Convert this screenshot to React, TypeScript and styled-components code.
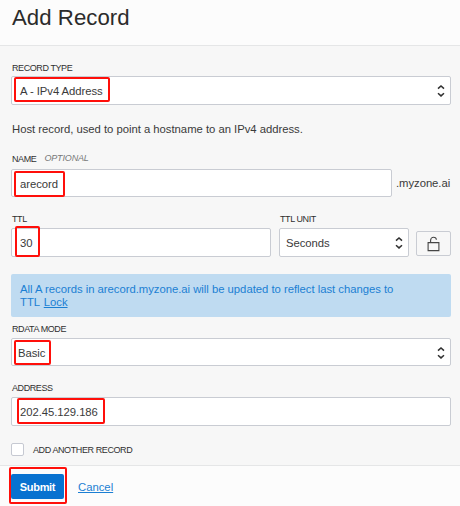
import React from "react";
import styled, { createGlobalStyle } from "styled-components";

const GlobalStyle = createGlobalStyle`
  *, *::before, *::after { box-sizing: border-box; }
  body {
    margin: 0;
    background: #f7f7f7;
    font-family: "Liberation Sans", Arial, sans-serif;
    font-size: 11.3px;
    color: #3a3a3a;
  }
`;

const Panel = styled.main`
  display: flex;
  flex-direction: column;
  width: 460px;
  height: 506px;
  overflow: hidden;
  background: #f7f7f7;
`;

const Header = styled.header`
  flex: none;
  height: 46px;
  padding: 4px 12px 0;
  background: #fcfcfc;
  border-bottom: 1px solid #e5e6e7;
`;

const Title = styled.h1`
  margin: 0;
  font-size: 22.2px;
  font-weight: 400;
  line-height: 28px;
  letter-spacing: 0.05px;
  color: #2b2b2b;
  white-space: nowrap;
`;

const Form = styled.form`
  flex: none;
  height: 419px;
  padding: 16px 9px 0 11px;
  display: flex;
  flex-direction: column;
`;

const Field = styled.div<{ $width?: string; $gap?: number }>`
  display: flex;
  flex-direction: column;
  flex: none;
  width: ${(p) => p.$width ?? "100%"};
  margin-bottom: ${(p) => p.$gap ?? 0}px;
`;

const Label = styled.span<{ $height?: number }>`
  display: block;
  height: ${(p) => p.$height ?? 14}px;
  padding-left: 1px;
  font-size: 9px;
  line-height: 12px;
  letter-spacing: -0.42px;
  color: #303030;
  white-space: nowrap;
`;

const Optional = styled.em`
  position: relative;
  top: -1px;
  margin-left: 6px;
  font-size: 9px;
  letter-spacing: -0.15px;
  color: #777;
`;

const Control = styled.div<{ $width?: number; $height?: number; $inset?: number }>`
  position: relative;
  display: flex;
  align-items: center;
  justify-content: space-between;
  width: ${(p) => (p.$width ? `${p.$width}px` : "100%")};
  height: ${(p) => p.$height ?? 29}px;
  padding: 1px 5px 0 ${(p) => p.$inset ?? 8}px;
  border: 1px solid #c9ccd3;
  border-radius: 2px;
  background: #fff;
`;

const Value = styled.span`
  line-height: 14px;
  letter-spacing: -0.05px;
  white-space: nowrap;
`;

const Highlight = styled.span<{ $x: number; $y: number; $w: number; $h: number }>`
  position: absolute;
  left: ${(p) => p.$x}px;
  top: ${(p) => p.$y}px;
  width: ${(p) => p.$w}px;
  height: ${(p) => p.$h}px;
  border: 2px solid #ff0f0a;
  border-radius: 2px;
  pointer-events: none;
`;

const Hint = styled.p`
  margin: 0 0 17px 1px;
  line-height: 14px;
  letter-spacing: -0.02px;
  white-space: nowrap;
`;

const Row = styled.div<{ $gap: number; $align?: string }>`
  display: flex;
  align-items: ${(p) => p.$align ?? "center"};
  gap: ${(p) => p.$gap}px;
`;

const LockButton = styled.button`
  display: flex;
  align-items: center;
  justify-content: center;
  width: 35px;
  height: 25px;
  margin: 0 0 1px -1px;
  padding: 0;
  border: 1px solid #c9ccd3;
  border-radius: 2px;
  background: #f7f7f7;
`;

const Notice = styled.div`
  flex: none;
  height: 43px;
  margin: 17px 0 6px;
  padding: 9px 9px 8px;
  border-radius: 2px;
  background: #bfdbf1;
  color: #1b7fd3;
  line-height: 13px;
  letter-spacing: -0.02px;
  white-space: nowrap;
`;

const Link = styled.a`
  color: #1b7fd3;
  text-decoration: underline;
`;

const NoticeLink = styled(Link)`
  margin-left: 1px;
`;

const Checkbox = styled.span`
  width: 13px;
  height: 13px;
  border: 1px solid #c6c9d2;
  border-radius: 2px;
  background: #fff;
`;

const CheckLabel = styled(Label)`
  height: 12px;
  letter-spacing: -0.4px;
`;

const Footer = styled.footer`
  position: relative;
  flex: 1;
  display: flex;
  align-items: center;
  gap: 14px;
  padding: 1px 0 0 11px;
  background: #fcfcfc;
  border-top: 1px solid #e5e6e7;
`;

const Submit = styled.button`
  width: 53px;
  height: 25px;
  padding: 0;
  border: 0;
  border-radius: 2px;
  background: #0872d0;
  color: #fff;
  font: bold 11px/24px "Liberation Sans", Arial, sans-serif;
  letter-spacing: -0.3px;
`;

const Sorter = () => (
  <svg width="8" height="14" viewBox="0 0 8 14" fill="none" stroke="#303030" strokeWidth="1.5">
    <path d="M1 4.6 4 1.9l3 2.7M1 9.2 4 11.9l3-2.7" />
  </svg>
);

const Unlock = () => (
  <svg width="13" height="16" viewBox="0 0 13 16" fill="none" stroke="#454545" strokeWidth="1.1">
    <path d="M1.1 6.6h10.8v8H1.1zM3.6 6.6V4.2C3.6 2.4 4.9 1.2 6.6 1.2S9.3 2.2 9.4 3.8" />
  </svg>
);

export default function App() {
  return (
    <Panel>
      <GlobalStyle />
      <Header>
        <Title>Add Record</Title>
      </Header>
      <Form>
        <Field $gap={17}>
          <Label>RECORD TYPE</Label>
          <Control>
            <Value>A - IPv4 Address</Value>
            <Sorter />
            <Highlight $x={2} $y={0} $w={96} $h={25} />
          </Control>
        </Field>
        <Hint>Host record, used to point a hostname to an IPv4 address.</Hint>
        <Field $gap={16}>
          <Label $height={16}>
            NAME <Optional>OPTIONAL</Optional>
          </Label>
          <Row $gap={4}>
            <Control $width={381} $height={28}>
              <Value>arecord</Value>
              <Highlight $x={2} $y={1} $w={51} $h={26} />
            </Control>
            <Value>.myzone.ai</Value>
          </Row>
        </Field>
        <Row $gap={8} $align="flex-end">
          <Field $width="260px">
            <Label $height={15}>TTL</Label>
            <Control>
              <Value>30</Value>
              <Highlight $x={3} $y={-3} $w={25} $h={31} />
            </Control>
          </Field>
          <Field $width="130px">
            <Label $height={15}>TTL UNIT</Label>
            <Control $inset={6}>
              <Value>Seconds</Value>
              <Sorter />
            </Control>
          </Field>
          <LockButton type="button" aria-label="Unlock">
            <Unlock />
          </LockButton>
        </Row>
        <Notice>
          All A records in arecord.myzone.ai will be updated to reflect last changes to
          <br />
          TTL <NoticeLink>Lock</NoticeLink>
        </Notice>
        <Field $gap={16}>
          <Label $height={15}>RDATA MODE</Label>
          <Control $height={28} $inset={6}>
            <Value>Basic</Value>
            <Sorter />
            <Highlight $x={2} $y={1} $w={37} $h={25} />
          </Control>
        </Field>
        <Field $gap={17}>
          <Label $height={15}>ADDRESS</Label>
          <Control>
            <Value>202.45.129.186</Value>
            <Highlight $x={5} $y={0} $w={88} $h={26} />
          </Control>
        </Field>
        <Row $gap={8}>
          <Checkbox />
          <CheckLabel>ADD ANOTHER RECORD</CheckLabel>
        </Row>
      </Form>
      <Footer>
        <Submit type="button">Submit</Submit>
        <Link>Cancel</Link>
        <Highlight $x={9} $y={1} $w={58} $h={37} />
      </Footer>
    </Panel>
  );
}
